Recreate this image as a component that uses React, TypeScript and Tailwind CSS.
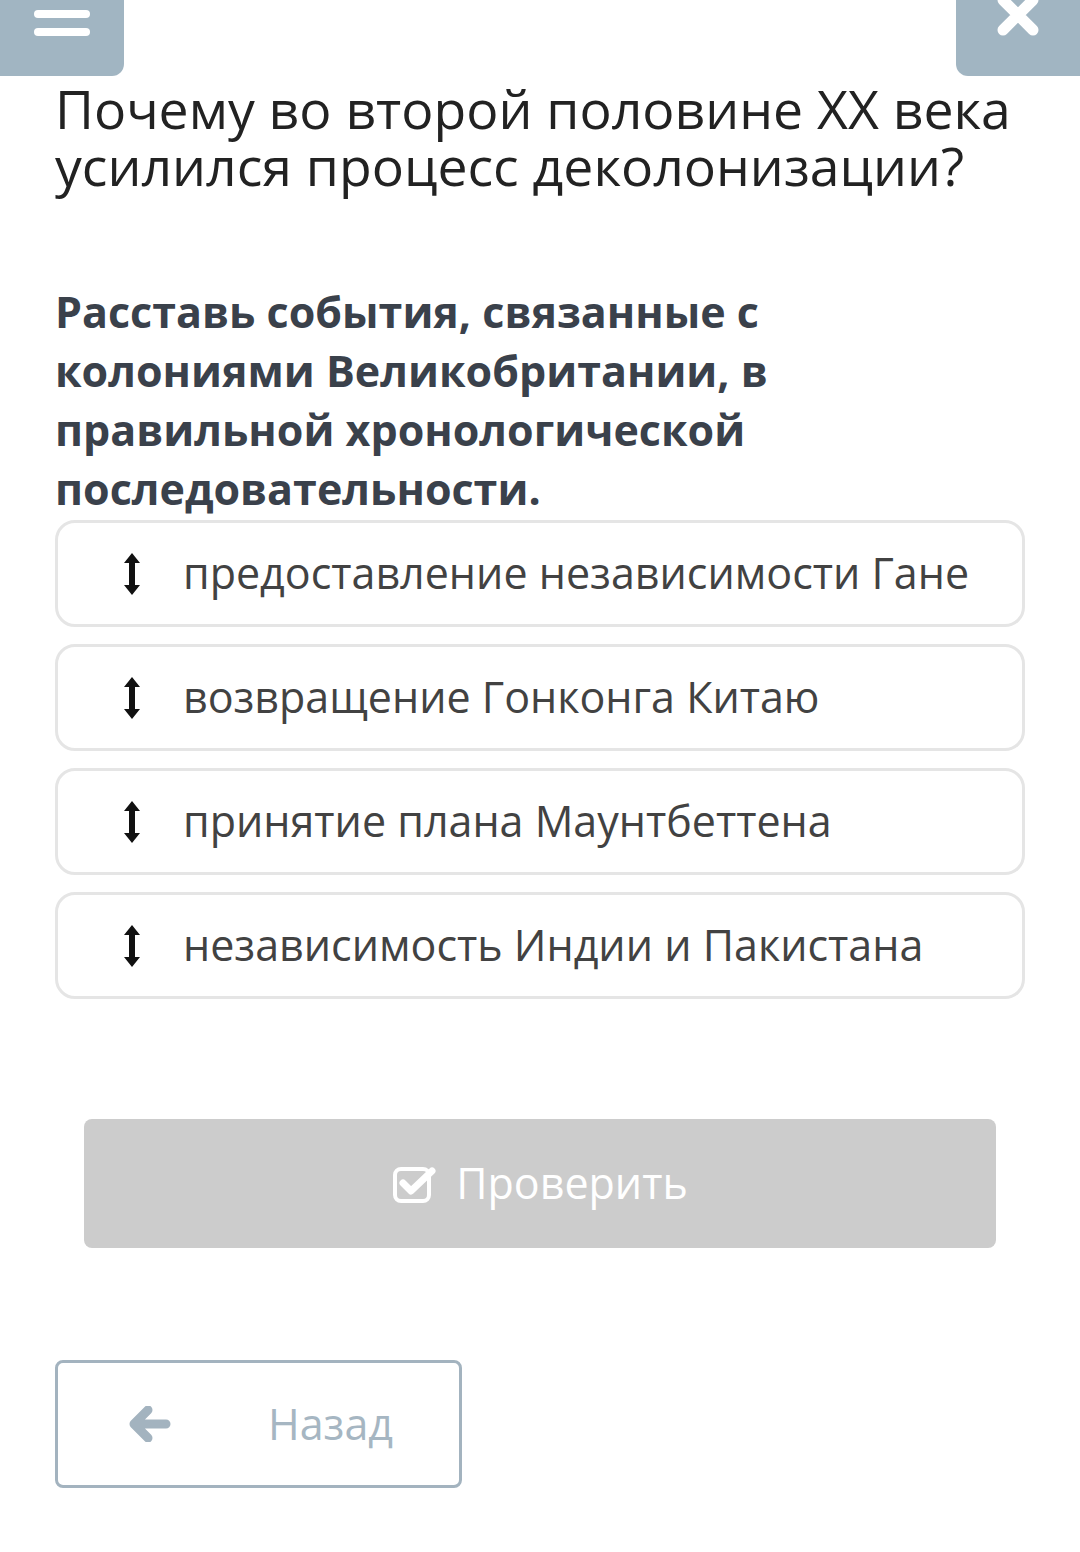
import React from "react";

const items = [
  "предоставление независимости Гане",
  "возвращение Гонконга Китаю",
  "принятие плана Маунтбеттена",
  "независимость Индии и Пакистана",
];

function UpDown() {
  return (
    <svg width="20" height="44" viewBox="0 0 20 44">
      <path d="M10 1 L18 11 H13 V33 H18 L10 43 L2 33 H7 V11 H2 Z" fill="#111" />
    </svg>
  );
}

export default function App() {
  return (
    <div className="relative w-[1080px] h-[1552px] bg-white" style={{ fontFamily: '"Open Sans", "Noto Sans", sans-serif' }}>
      <div className="absolute left-0 top-0 w-[124px] h-[76px] bg-[#a1b5c2] rounded-br-[12px] overflow-hidden">
        <div className="absolute left-[34px] top-[-8px] w-[56px] h-[8px] rounded bg-white" />
        <div className="absolute left-[34px] top-[10px] w-[56px] h-[8px] rounded bg-white" />
        <div className="absolute left-[34px] top-[28px] w-[56px] h-[8px] rounded bg-white" />
      </div>
      <div className="absolute right-0 top-0 w-[124px] h-[76px] bg-[#a1b5c2] rounded-bl-[12px] overflow-hidden flex justify-center">
        <svg width="46" height="46" viewBox="0 0 46 46" className="mt-[-8px]">
          <path d="M8 8 L38 38 M38 8 L8 38" stroke="white" strokeWidth="11" strokeLinecap="round" />
        </svg>
      </div>

      <div className="pt-[80px] px-[55px]">
        <h1 className="text-[53.5px] leading-[57px] text-[#222] font-normal">
          Почему во второй половине XX века усилился процесс деколонизации?
        </h1>
        <p className="mt-[88px] text-[43px] leading-[59px] font-bold text-[#3a414b] w-[850px]">
          Расставь события, связанные с колониями Великобритании, в правильной хронологической последовательности.
        </p>
        <div className="mt-[2px] flex flex-col gap-[17px] w-[970px]">
          {items.map((t) => (
            <div key={t} className="h-[107px] border-[3px] border-[#e5e5e5] rounded-[20px] flex items-center">
              <div className="w-[125px] flex justify-center pl-[22px]">
                <UpDown />
              </div>
              <span className="text-[43px] text-[#424242]">{t}</span>
            </div>
          ))}
        </div>
        <div className="mt-[120px] mx-[29px] h-[129px] bg-[#cccccc] rounded-[8px] flex items-center justify-center gap-[18px]">
          <svg width="46" height="42" viewBox="0 0 46 42">
            <rect x="3" y="6" width="34" height="32" rx="6" fill="none" stroke="white" strokeWidth="4" />
            <path d="M11 20 L19 28 L40 8" fill="none" stroke="white" strokeWidth="7" strokeLinecap="round" strokeLinejoin="round" />
          </svg>
          <span className="text-[43px] text-white">Проверить</span>
        </div>
        <div className="mt-[112px] w-[407px] h-[128px] border-[3px] border-[#a3b3bf] rounded-[8px] flex items-center">
          <svg width="44" height="36" viewBox="0 0 44 36" className="ml-[70px]">
            <path d="M20 4 L6 18 L20 32 M8 18 H38" fill="none" stroke="#a3b3bf" strokeWidth="9" strokeLinecap="round" strokeLinejoin="round" />
          </svg>
          <span className="ml-[96px] text-[43px] text-[#a6b6c2]">Назад</span>
        </div>
      </div>
    </div>
  );
}
